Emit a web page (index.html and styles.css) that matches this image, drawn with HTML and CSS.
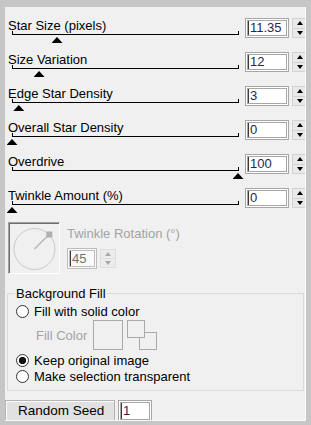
FILE: index.html
```html
<!DOCTYPE html>
<html>
<head>
<meta charset="utf-8">
<link rel="stylesheet" href="styles.css">
</head>
<body>
<div class="panel">
  <div class="row">
    <div class="ctl">
      <div class="label">Star Size (pixels)</div>
      <div class="track"><span class="thumb" style="left:38.5px"></span></div>
    </div>
    <div class="num">11.35</div>
    <div class="spin"><span class="up"></span><span class="dn"></span></div>
  </div>
  <div class="row">
    <div class="ctl">
      <div class="label">Size Variation</div>
      <div class="track"><span class="thumb" style="left:20.6px"></span></div>
    </div>
    <div class="num">12</div>
    <div class="spin"><span class="up"></span><span class="dn"></span></div>
  </div>
  <div class="row">
    <div class="ctl">
      <div class="label">Edge Star Density</div>
      <div class="track"><span class="thumb" style="left:0.3px"></span></div>
    </div>
    <div class="num">3</div>
    <div class="spin"><span class="up"></span><span class="dn"></span></div>
  </div>
  <div class="row">
    <div class="ctl">
      <div class="label">Overall Star Density</div>
      <div class="track"><span class="thumb" style="left:-6.5px"></span></div>
    </div>
    <div class="num">0</div>
    <div class="spin"><span class="up"></span><span class="dn"></span></div>
  </div>
  <div class="row">
    <div class="ctl">
      <div class="label">Overdrive</div>
      <div class="track"><span class="thumb" style="left:219.5px"></span></div>
    </div>
    <div class="num">100</div>
    <div class="spin"><span class="up"></span><span class="dn"></span></div>
  </div>
  <div class="row">
    <div class="ctl">
      <div class="label">Twinkle Amount (%)</div>
      <div class="track"><span class="thumb" style="left:-6.5px"></span></div>
    </div>
    <div class="num">0</div>
    <div class="spin"><span class="up"></span><span class="dn"></span></div>
  </div>

  <div class="dial-row">
    <div class="dial">
      <svg width="50" height="50" viewBox="0 0 50 50">
        <circle cx="25.5" cy="26" r="20.5" fill="none" stroke="#c9c9c9" stroke-width="1"/>
        <line x1="25.5" y1="26" x2="40" y2="11.5" stroke="#b4b4b4" stroke-width="1.2"/>
        <rect x="37.3" y="8.5" width="6" height="6" fill="#b0b0b0"/>
      </svg>
    </div>
    <div class="rot">
      <div class="label dis">Twinkle Rotation (°)</div>
      <div class="rot-ctl">
        <div class="num small">45</div>
        <div class="spin dspin"><span class="up"></span><span class="dn"></span></div>
      </div>
    </div>
  </div>

  <fieldset class="group">
    <legend>Background Fill</legend>
    <div class="radio-row first"><span class="radio"></span><span>Fill with solid color</span></div>
    <div class="fill-row">
      <span>Fill Color</span>
      <span class="swatch"></span>
      <svg class="swap" width="31" height="31" viewBox="0 0 31 31">
        <rect x="12.5" y="12.5" width="17" height="17" fill="none" stroke="#a9a9a9"/>
        <rect x="0.5" y="0.5" width="17" height="17" fill="#f0f0f0" stroke="#a9a9a9"/>
      </svg>
    </div>
    <div class="radio-row keep"><span class="radio on"></span><span>Keep original image</span></div>
    <div class="radio-row"><span class="radio"></span><span>Make selection transparent</span></div>
  </fieldset>

  <div class="seed-row">
    <div class="btn">Random Seed</div>
    <div class="num seed">1</div>
  </div>
</div>
</body>
</html>
```

FILE: styles.css
```css
html, body {
  margin: 0;
  padding: 0;
}
body {
  background: #c6c6c6;
  width: 311px;
  height: 425px;
  overflow: hidden;
  font-family: "Liberation Sans", Arial, sans-serif;
  font-size: 13px;
  color: #000;
}
.panel {
  box-sizing: border-box;
  margin: 7px 0 0 5px;
  width: 301px;
  height: 414px;
  padding-top: 9px;
  background: #f0f0f0;
  border-right: 1px solid #f9f9f9;
  border-bottom: 1px solid #f9f9f9;
  overflow: hidden;
}
.row {
  display: flex;
  height: 34px;
  padding-left: 3px;
}
.ctl {
  width: 237px;
  flex-shrink: 0;
}
.label {
  line-height: 15px;
  height: 15px;
  margin-top: 2px;
  white-space: nowrap;
}
.label.dis {
  color: #a3a3a3;
  margin-top: 4px;
}
.track {
  position: relative;
  margin-left: 4px;
  margin-top: -2px;
  width: 225px;
  height: 3px;
  border: 1px solid #000;
  border-top: 0;
}
.thumb {
  position: absolute;
  top: 6px;
  width: 11px;
  height: 6px;
  background: #000;
  clip-path: polygon(50% 0, 100% 100%, 0 100%);
}
.num {
  box-sizing: border-box;
  flex-shrink: 0;
  width: 44px;
  height: 20px;
  margin-top: 2px;
  border: 3px double #a6a6a6;
  background: #fff;
  box-shadow: inset 1px 0 0 #3a3a3a;
  padding-left: 2px;
  line-height: 14px;
  font-size: 13px;
  color: #1b2858;
  white-space: nowrap;
}
.spin {
  flex-shrink: 0;
  display: flex;
  flex-direction: column;
  width: 16px;
  height: 20px;
  margin: 2px 0 0 3px;
}
.spin span {
  flex: 1;
  display: flex;
  align-items: center;
  justify-content: center;
  border: 1px solid #d2d2d2;
  background: #e9e9e9;
}
.spin span + span {
  border-top: 0;
}
.up::before, .dn::before {
  content: "";
  width: 0;
  height: 0;
  border-left: 3px solid transparent;
  border-right: 3px solid transparent;
}
.up::before {
  border-bottom: 4px solid #000;
}
.dn::before {
  border-top: 4px solid #000;
}
.dial-row {
  display: flex;
  margin-top: 2px;
  padding-left: 3px;
}
.dial {
  box-sizing: border-box;
  width: 52px;
  height: 52px;
  border: 1px solid;
  border-color: #a0a0a0 #ffffff #ffffff #a0a0a0;
  box-shadow: inset 1px 1px 0 #6e6e6e;
}
.dial svg {
  display: block;
}
.rot {
  margin-left: 7px;
}
.rot-ctl {
  display: flex;
  margin-top: 5px;
}
.num.small {
  width: 30px;
  height: 21px;
  border-color: #bdbdbd;
  background: #f9f9f9;
  color: #707070;
  line-height: 15px;
}
.dspin {
  margin-top: 3px;
  height: 19px;
}
.dspin span {
  border-color: #dedede;
  background: #ececec;
}
.dspin .up::before {
  border-bottom-color: #a8a8a8;
}
.dspin .dn::before {
  border-top-color: #a8a8a8;
}
.group {
  box-sizing: border-box;
  margin: 12px 0 0 2px;
  width: 297px;
  padding: 0 0 6px 8px;
  border: 1px solid #dadada;
  min-width: 0;
}
.group legend {
  padding: 0 1px;
  margin-left: -1px;
  line-height: 15px;
}
.radio-row {
  display: flex;
  align-items: center;
  gap: 5px;
  height: 16px;
  white-space: nowrap;
}
.radio-row.first {
  margin-top: 2px;
}
.radio-row.keep {
  margin-top: 2px;
}
.radio {
  box-sizing: border-box;
  width: 13px;
  height: 13px;
  border: 1px solid #333;
  border-radius: 50%;
  background: #fff;
  flex-shrink: 0;
}
.radio.on {
  background: radial-gradient(circle, #111 0, #111 3.3px, #fff 4px);
}
.fill-row {
  display: flex;
  align-items: center;
  height: 30px;
  margin: 1px 0 0 20px;
  color: #a3a3a3;
}
.swatch {
  box-sizing: border-box;
  width: 30px;
  height: 30px;
  margin-left: 6px;
  border: 1px solid #a9a9a9;
}
.swap {
  display: block;
  margin-left: 4px;
}
.seed-row {
  display: flex;
  margin-top: 9px;
}
.btn {
  box-sizing: border-box;
  width: 110px;
  height: 24px;
  padding: 2px 0 0 12px;
  background: #e1e1e1;
  border: 1px solid #b4b4b4;
  box-shadow: inset 1px 1px 0 #fbfbfb;
  line-height: 15px;
  font-size: 13.5px;
  white-space: nowrap;
}
.num.seed {
  width: 34px;
  height: 22px;
  margin: 0 0 0 3px;
  line-height: 15px;
}
```
